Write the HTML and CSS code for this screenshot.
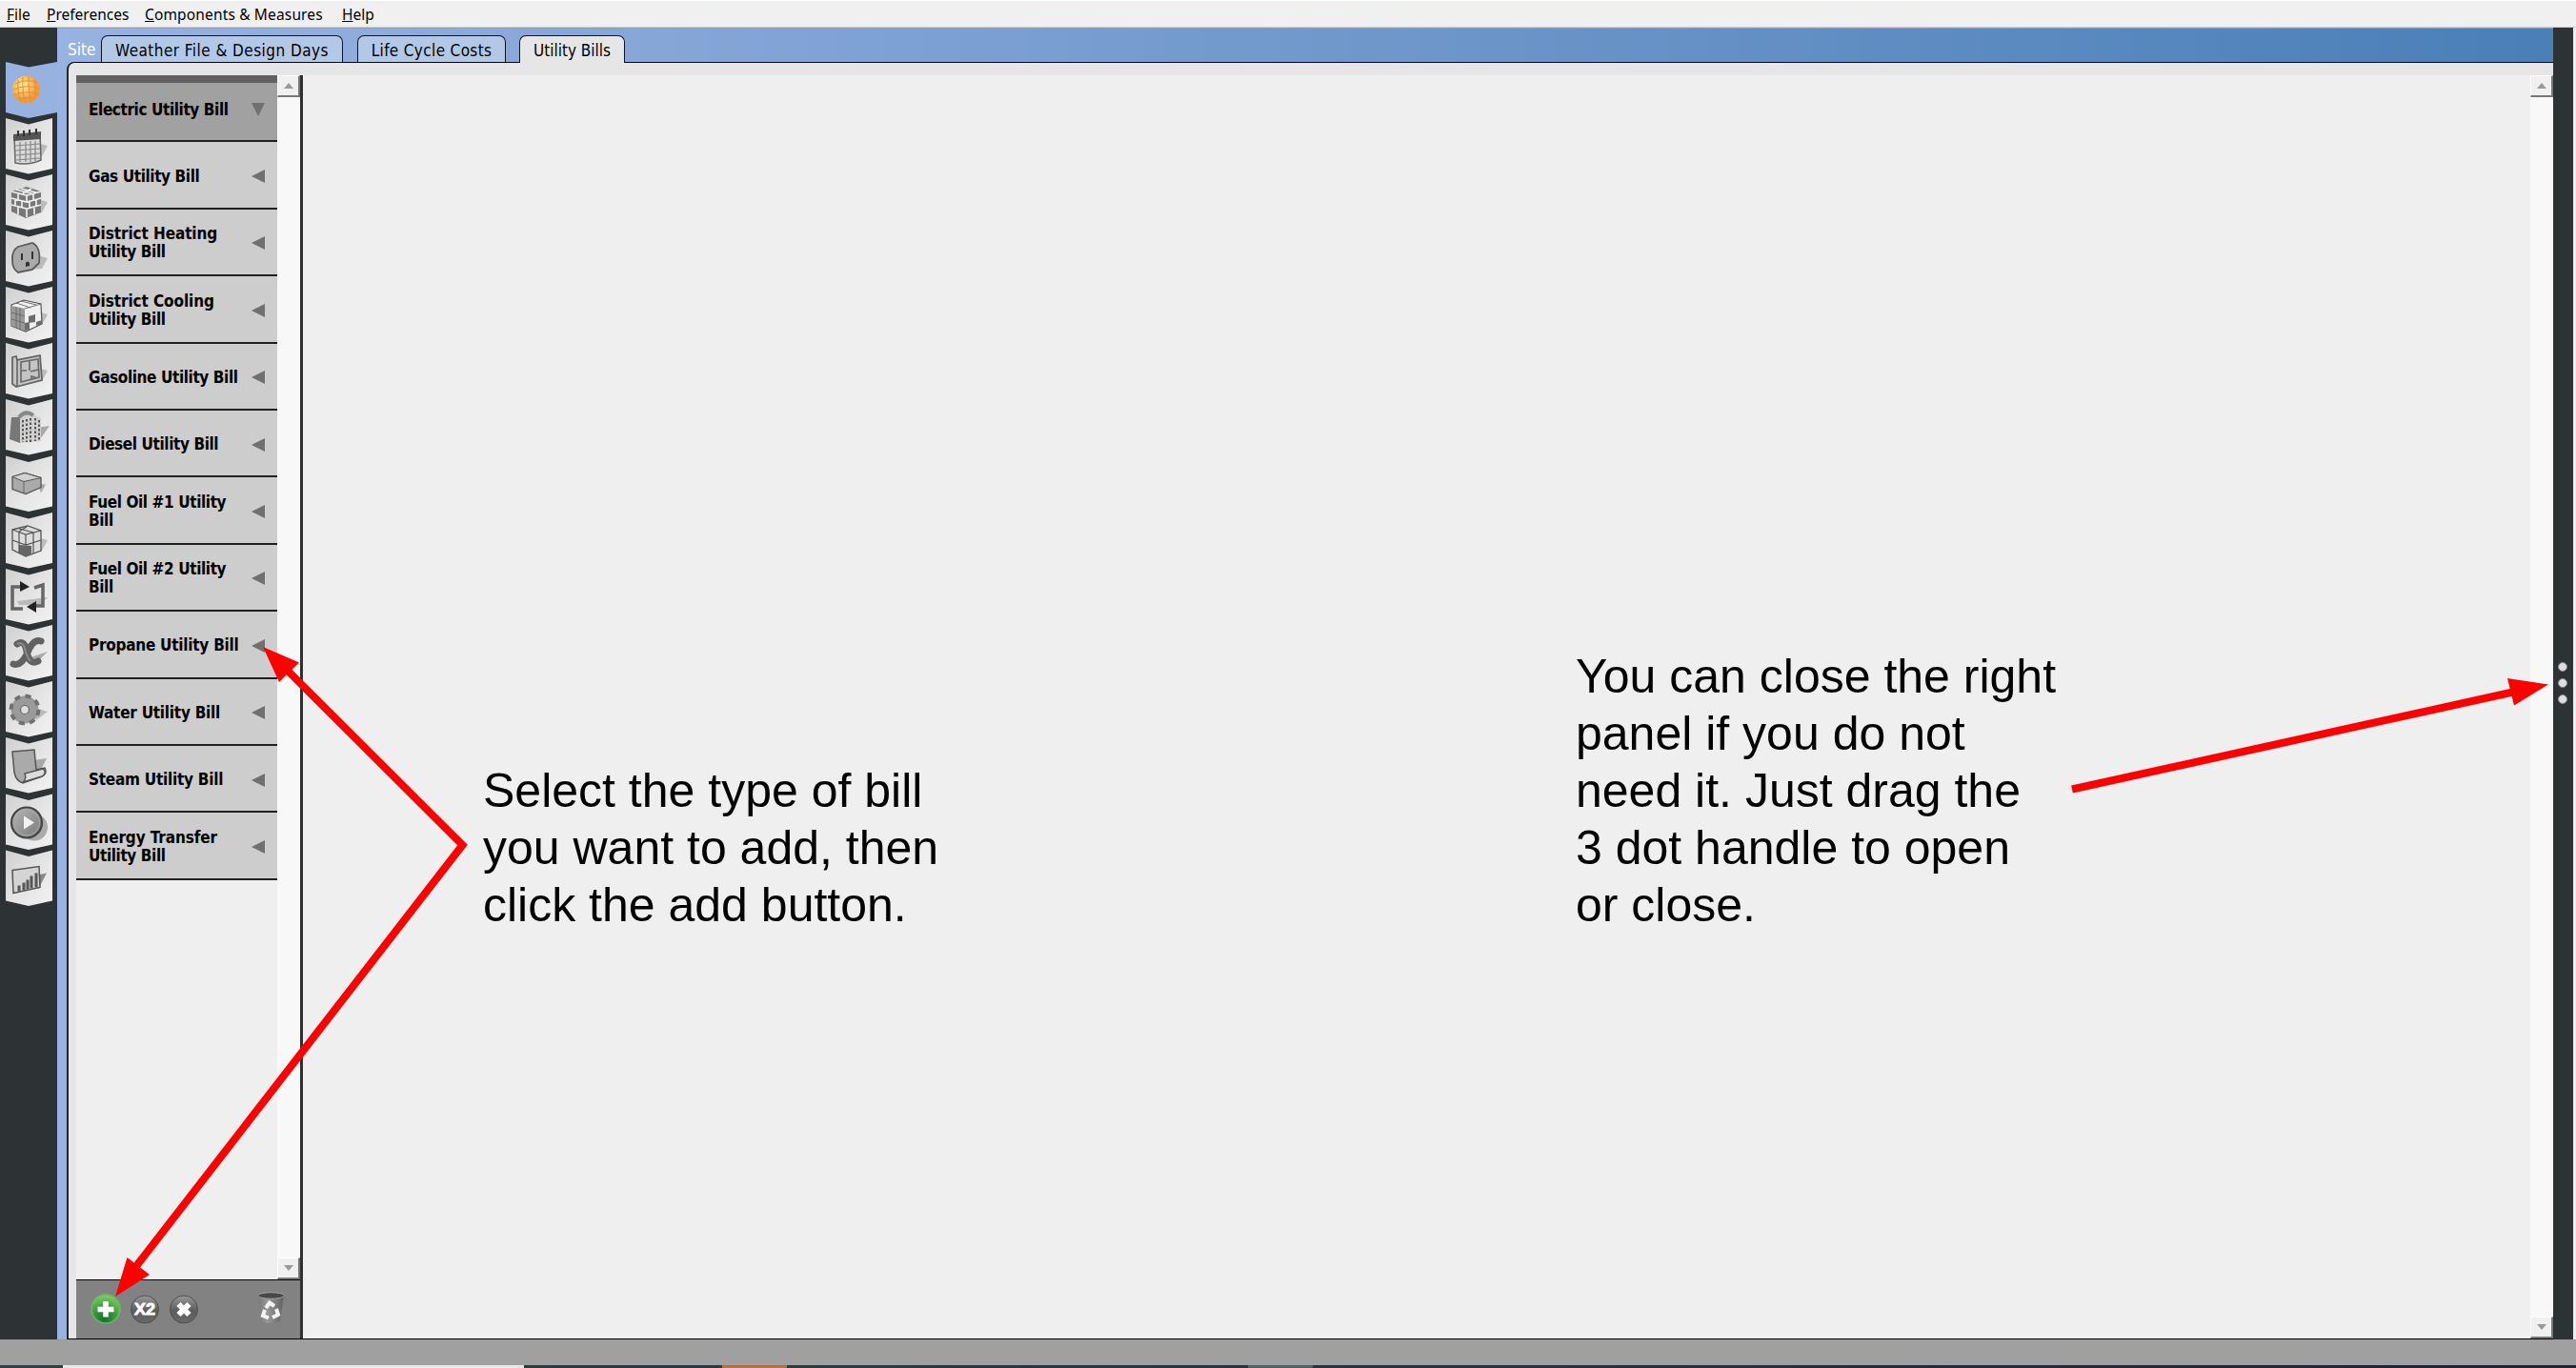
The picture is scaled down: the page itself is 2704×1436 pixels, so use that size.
FILE: index.html
```html
<!DOCTYPE html>
<html lang="en">
<head>
<meta charset="utf-8">
<title>Utility Bills</title>
<link rel="stylesheet" href="styles.css">
</head>
<body>
<div class="app">
  <nav class="menubar">
    <span class="m-file"><u>F</u>ile</span><span class="m-pref"><u>P</u>references</span><span class="m-comp"><u>C</u>omponents &amp; Measures</span><span class="m-help"><u>H</u>elp</span>
  </nav>
  <div class="main">
    <aside class="rail">
      <svg width="60" height="1376" viewBox="0 29 60 1376">
        <defs>
          <linearGradient id="tile" x1="0" y1="0" x2="1" y2="1"><stop offset="0" stop-color="#cfcfcf"/><stop offset=".5" stop-color="#e4e4e4"/><stop offset="1" stop-color="#f2f2f2"/></linearGradient>
          <linearGradient id="gr" x1="0" y1="0" x2="1" y2="1"><stop offset="0" stop-color="#b8b8b8"/><stop offset="1" stop-color="#777"/></linearGradient>
          <radialGradient id="sun" cx=".38" cy=".35"><stop offset="0" stop-color="#fff0a0"/><stop offset=".6" stop-color="#fcc260"/><stop offset="1" stop-color="#f39a3c"/></radialGradient>
          <path id="t" d="M6 0L30 6.500L55 0V53L30 58.500L6 53Z" fill="url(#tile)"/>
          <path id="sh" d="M36 25L50 29L44 40L30 41Z" fill="#a8a8a8" opacity=".7"/>
        </defs>
        <path d="M6 65L30 70.500L60 65V118L30 124L6 118Z" fill="#97b1e0"/>
        <circle cx="27.500" cy="94" r="14.500" fill="url(#sun)"/>
        <path d="M16 88Q28 82 39 87M14 94Q28 88 41 93M15 100Q28 94 41 99M19 105Q29 100 37 104M19 84Q18 98 22 106M24 81Q23 98 27 108M30 80Q30 98 32 107M36 83Q38 94 37 103" fill="none" stroke="#e0913a" stroke-width="1.100"/>

        <g transform="translate(0 124)"><use href="#t"/><use href="#sh"/>
          <path d="M15 18L42 16L43 44Q30 50 16 47Z" fill="#d9d9d9" stroke="#666" stroke-width="1.500"/><path d="M14 17L43 14V22L14 24Z" fill="#555"/><path d="M19 13V19M25 13V19M31 12V18M38 11V17" stroke="#333" stroke-width="2"/><path d="M16 29L42 27M16 34L42 32M16 39L42 37M17 44L42 42M21 25V46M27 25V46M32 24V46M37 24V45" stroke="#858585" stroke-width="1.200"/></g>
        <g transform="translate(0 183)"><use href="#t"/><use href="#sh"/>
          <path d="M12 18L28 13L43 18V40L27 46L12 39Z" fill="#787878"/>
          <path d="M12 18L28 22L43 18M12 25L28 29L43 25M12 32L28 36L43 32M28 22V29M19 20V26M23 28V35M16 26V33M19 34V42M28 36V45M35 20V27M38 26V33M31 28V35M36 34V42M17 16L33 20M22 15L38 19M24 20L33 15" fill="none" stroke="#eee" stroke-width="1.700"/></g>
        <g transform="translate(0 242)"><use href="#t"/><use href="#sh"/>
          <path d="M19 17L34 13Q43 17 41 34L34 41L19 44Q13 40 13 32Q12 21 19 17Z" fill="#aaa" stroke="#5b5b5b" stroke-width="1.800"/><path d="M23 24V31M34 22V30" stroke="#333" stroke-width="2"/><path d="M27 38V34Q29 31 31 34V37Z" fill="#333"/></g>
        <g transform="translate(0 301)"><use href="#t"/><use href="#sh"/>
          <path d="M12 19L25 14L43 18L44 39L27 47L12 41Z" fill="#f0f0f0" stroke="#555" stroke-width="1.200"/><path d="M12 20L26 23V46L12 41Z" fill="#999"/><path d="M26 23L43 18M12 27L26 31M12 34L26 38M17 21V43M21 22V45M17 17L32 22M22 15L38 19" fill="none" stroke="#666" stroke-width=".9"/><path d="M30 31L37 29V37L30 38ZM26 38L31 37V45L26 46ZM38 37L44 35V39L38 41Z" fill="#6d6d6d"/></g>
        <g transform="translate(0 360)"><use href="#t"/><use href="#sh"/>
          <path d="M13 15L17 14L18 18L42 13L44 39L17 46L13 43Z" fill="#c4c4c4" stroke="#666" stroke-width="1.800"/><path d="M18 18V45M22 20L40 17L41 36L22 41ZM23 29H28M31 19V29M40 28L32 30M33 39V35L39 37" fill="none" stroke="#6a6a6a" stroke-width="1.700"/></g>
        <g transform="translate(0 419)"><use href="#t"/><path d="M38 30L52 28L40 45Z" fill="#aaa"/>
          <path d="M12 19L20 16Q24 10 33 13L35 16L43 20V44L22 46L10 42Z" fill="#d0d0d0"/><path d="M12 19L21 19V46L10 42Z" fill="#777"/><path d="M20 19Q27 11 35 17" fill="none" stroke="#888" stroke-width="4"/><path d="M24 22V45M28 21V45M32 20V45M37 20V44M41 22V43" stroke="#555" stroke-width="2" stroke-dasharray="2.500 2"/></g>
        <g transform="translate(0 478.500)"><use href="#t"/><path d="M39 29L48 30L43 39Z" fill="#aaa"/>
          <path d="M13 22L26 18L43 23V33L27 40L13 35Z" fill="#aaa" stroke="#555" stroke-width="1.300"/><path d="M13 22L26 18L43 23L25 27Z" fill="#d2d2d2" stroke="#555"/><path d="M25 27V39" stroke="#666"/></g>
        <g transform="translate(0 538)"><use href="#t"/><use href="#sh"/>
          <path d="M13 18L29 14L43 19V40L27 46L13 39Z" fill="#ddd" stroke="#555" stroke-width="1.300"/><path d="M20 34L33 35V44L27 46L20 43Z" fill="#666"/><path d="M13 18L27 23L43 19M27 23V34M20 17L35 21V43M20 20V43M28 15L20 20M13 29L27 34L43 29" fill="none" stroke="#555" stroke-width="1.200"/></g>
        <g transform="translate(0 597)"><use href="#t"/><path d="M18 34L50 30L42 38H20Z" fill="#bbb"/>
          <path d="M22 19H13V42H24M36 20L45 17V39H38" fill="none" stroke="#666" stroke-width="3.500"/><path d="M21 13L31 19L21 24Z M38 34L28 40L38 46Z" fill="#222"/></g>
        <g transform="translate(0 656)"><use href="#t"/><path d="M32 34L50 28L40 38Z" fill="#aaa"/>
          <path d="M18 20Q26 15 28 28Q31 43 40 38M43 17Q35 14 29 29Q22 44 14 41" fill="none" stroke="#626262" stroke-width="7" stroke-linecap="round"/><path d="M18 20Q25 17 27 28Q29 35 32 38" fill="none" stroke="#8a8a8a" stroke-width="2"/></g>
        <g transform="translate(0 715)"><use href="#t"/><path d="M36 28L50 32L38 41Z" fill="#bbb"/>
          <circle cx="26" cy="30" r="9.500" fill="none" stroke="#9a9a9a" stroke-width="10"/><circle cx="26" cy="30" r="14.500" fill="none" stroke="#707070" stroke-width="4" stroke-dasharray="6 5.400"/><circle cx="26" cy="30" r="4.500" fill="#ddd" stroke="#666" stroke-width="1.200"/></g>
        <g transform="translate(0 774)"><use href="#t"/><path d="M35 24L49 22L39 42Z" fill="#aaa"/>
          <path d="M13 15L36 13L38 34L47 32Q50 38 44 41L24 48Q17 46 15 37Z" fill="#aaa" stroke="#555" stroke-width="1.500"/><path d="M24 47Q28 44 26 38L45 33Q50 37 44 41Z" fill="#ddd" stroke="#555" stroke-width="1.500"/></g>
        <g transform="translate(0 833.500)"><use href="#t"/><circle cx="36" cy="35" r="14" fill="#aaa"/>
          <circle cx="28" cy="30" r="16" fill="url(#gr)" stroke="#444" stroke-width="2.200"/><circle cx="28" cy="30" r="13.500" fill="none" stroke="#aaa"/><path d="M25 23L36 30L25 37Z" fill="#f2f2f2"/></g>
        <g transform="translate(0 892.500)"><use href="#t"/><path d="M39 26L49 24L40 41Z" fill="#888"/>
          <path d="M13 21L41 17L42 39L14 45Z" fill="#d4d4d4" stroke="#555" stroke-width="1.500"/><path d="M20 43V37M25 42V34M29 41V31M33 40V27M38 39V24" stroke="#555" stroke-width="3"/></g>
      </svg>
    </aside>
    <section class="stage">
      <header class="tabs">
        <span class="site">Site</span>
        <span class="tab tab-a"><b>Weather File &amp; Design Days</b></span>
        <span class="tab tab-b"><b>Life Cycle Costs</b></span>
        <span class="tab tab-c"><b>Utility Bills</b></span>
      </header>
      <div class="panel">
        <div class="left">
          <div class="listwrap">
            <div class="list">
              <div class="row on"><span>Electric Utility Bill</span><i class="down"></i></div>
              <div class="row"><span>Gas Utility Bill</span><i></i></div>
              <div class="row"><span><em>District Heating</em><br>Utility Bill</span><i></i></div>
              <div class="row"><span><em>District Cooling</em><br>Utility Bill</span><i></i></div>
              <div class="row"><span>Gasoline Utility Bill</span><i></i></div>
              <div class="row"><span>Diesel Utility Bill</span><i></i></div>
              <div class="row"><span>Fuel Oil #1 Utility<br>Bill</span><i></i></div>
              <div class="row"><span>Fuel Oil #2 Utility<br>Bill</span><i></i></div>
              <div class="row mid"><span>Propane Utility Bill</span><i></i></div>
              <div class="row mid"><span>Water Utility Bill</span><i></i></div>
              <div class="row mid"><span>Steam Utility Bill</span><i></i></div>
              <div class="row"><span><em>Energy Transfer</em><br>Utility Bill</span><i></i></div>
            </div>
            <div class="scroll"><div class="sb up"></div><div class="sb dn"></div></div>
          </div>
          <div class="tools">
            <svg width="235" height="61" viewBox="80 1344 235 61">
              <defs>
                <radialGradient id="gn" cx=".45" cy=".85" r=".9"><stop offset="0" stop-color="#176f2c"/><stop offset=".5" stop-color="#3fa13e"/><stop offset="1" stop-color="#92d36e"/></radialGradient>
                <linearGradient id="gb" x1="0" y1="0" x2="0" y2="1"><stop offset="0" stop-color="#999"/><stop offset=".55" stop-color="#5c5c5c"/><stop offset="1" stop-color="#696969"/></linearGradient>
                <linearGradient id="bin"><stop offset="0" stop-color="#777"/><stop offset=".35" stop-color="#999"/><stop offset="1" stop-color="#606060"/></linearGradient>
              </defs>
              <circle cx="111" cy="1374" r="15.500" fill="url(#gn)"/><circle cx="111" cy="1374" r="15" fill="none" stroke="#65ba63" stroke-width="1.500"/>
              <path d="M111 1366V1382.500M102.500 1374.500H119.500" stroke="#fff" stroke-width="5.500"/>
              <circle cx="152" cy="1374.500" r="14.500" fill="url(#gb)" stroke="#505050"/>
              <text x="152" y="1380" text-anchor="middle" textLength="22" lengthAdjust="spacingAndGlyphs" class="x2">X2</text>
              <circle cx="193" cy="1374.500" r="14.500" fill="url(#gb)" stroke="#505050"/>
              <path d="M187.500 1369L198.500 1380M198.500 1369L187.500 1380" stroke="#fff" stroke-width="6"/>
              <path d="M271 1360L275 1387Q284 1391 294 1387L298 1360Z" fill="url(#bin)"/>
              <ellipse cx="284.500" cy="1360" rx="14" ry="3.300" fill="#484848" stroke="#a5a5a5"/>
              <g fill="none" stroke="#f4f4f4" stroke-width="4"><path d="M279 1373L283 1367.500L288 1371"/><path d="M290 1374L292 1380L286 1383"/><path d="M282 1383.500L276 1381L278 1375"/></g>
            </svg>
          </div>
        </div>
        <div class="content"><div class="scroll right"><div class="sb up"></div><div class="sb dn"></div></div></div>
      </div>
    </section>
    <aside class="handle"><i></i><i></i><i></i></aside>
    <div class="edge"></div>
  </div>
  <div class="status"></div>
  <div class="taskbar"><i class="tk1"></i><i class="tk2"></i><i class="tk3"></i><i class="tk4"></i><i class="tk5"></i><i class="tk6"></i><i class="tk7"></i></div>
  <svg class="arrows" width="2704" height="1436" viewBox="0 0 2704 1436">
    <path d="M300 702L485.500 887L140 1333M2175 828.500L2640 726" fill="none" stroke="#f00" stroke-width="8"/>
    <path d="M276 679L314 695.500L293 716ZM121 1361L133.500 1320L157 1338ZM2675 718.500L2632 712L2639 740.500Z" fill="#f00"/>
  </svg>
  <p class="note n1">Select the type of bill<br>you want to add, then<br>click the add button.</p>
  <p class="note n2">You can close the right<br>panel if you do not<br>need it. Just drag the<br>3 dot handle to open<br>or close.</p>
</div>
</body>
</html>
```

FILE: styles.css
```css
* { box-sizing: border-box; }
body { margin: 0; font-family: "DejaVu Sans Condensed", "DejaVu Sans", sans-serif; color: #000; }
.app { position: relative; width: 2704px; height: 1436px; overflow: hidden; display: flex; flex-direction: column; background: #efefef; }
.menubar { height: 29px; flex: none; display: flex; align-items: center; padding: 1px 0 0 7px; gap: 17px; font: 15.500px/24px "Noto Sans", sans-serif; background: #f0f0f0; border-top: 1px solid #fff; border-bottom: 1px solid #ccc; white-space: nowrap; }
.m-file { width: 25px; }
.m-pref { width: 86px; }
.m-comp { width: 190px; letter-spacing: .15px; }
.main { height: 1377px; display: flex; flex: none; }
.rail { width: 60px; background: #2d3234; }
.rail svg { display: block; }
.stage { width: 2620px; display: flex; flex-direction: column; padding-left: 10px; background: linear-gradient(90deg, #98b2e1, #4a7fb7); border-top: 1px solid #8fa0b5; }
.tabs { height: 35px; display: flex; align-items: flex-end; padding-left: 1px; font-size: 17px; white-space: nowrap; }
.site { width: 35px; color: #fff; line-height: 26px; }
.tab { height: 28px; border: 1.5px solid #10151d; border-bottom: 0; border-radius: 7px 7px 0 0; background: #b3c8e6; display: flex; justify-content: center; line-height: 31px; }
.tab b { font-weight: normal; }
.tab-a { width: 254px; letter-spacing: .45px; }
.tab-b { width: 156px; margin-left: 15px; letter-spacing: .35px; }
.tab-c { width: 111px; margin-left: 14px; background: #e6e6e6; height: 29px; margin-bottom: -1px; position: relative; }
.panel { flex: 1; border-top: 1px solid #000; border-left: 2px solid #1d2638; border-bottom: 1px solid #000; border-radius: 8px 0 0 0; background: #e6e6e6; padding: 13px 0 0 8px; display: flex; }
.left { width: 238px; border-right: 3px solid #303030; display: flex; flex-direction: column; }
.listwrap { flex: 1; display: flex; background: #efefef; border-bottom: 1px solid #000; }
.list { width: 211px; }
.row { height: 70.400px; border-bottom: 2px solid #202020; background: #cdcdcd; display: flex; align-items: center; justify-content: space-between; padding: 3px 13px 0; font: bold 17px/19px "DejaVu Sans Condensed", "DejaVu Sans", sans-serif; letter-spacing: -.4px; white-space: nowrap; }
.row span { width: 170px; }
.row em { font-style: normal; letter-spacing: -.1px; }
.row.mid { letter-spacing: -.25px; }
.row i { width: 0; height: 0; border: 7px solid transparent; border-right: 14px solid #707070; border-left: 0; }
.row.on { background: #a1a1a1; border-top: 8px solid #626262; padding: 0 13px 4px; }
.row .down { border: 7px solid transparent; border-top: 14px solid #707070; border-bottom: 0; }
.scroll { width: 24px; display: flex; flex-direction: column; justify-content: space-between; background: #f8f8f8; }
.sb { height: 23px; display: flex; align-items: center; justify-content: center; background: #f0f0f0; border: 1px solid #fff; border-right: 2px solid #777; border-bottom: 2px solid #777; }
.sb::after { content: ""; border: 5px solid transparent; border-top: 0; border-bottom: 6px solid #999; }
.dn::after { border-bottom: 0; border-top: 6px solid #999; }
.tools { height: 61px; background: #828282; }
.tools svg { display: block; }
.x2 { font: bold 16px "Liberation Sans", sans-serif; fill: #fff; stroke: #fff; stroke-width: .8px; }
.content { flex: 1; background: #efefef; display: flex; justify-content: flex-end; }
.handle { width: 21px; background: #2d3234; display: flex; flex-direction: column; align-items: center; gap: 7px; padding: 666px 2px 0 0; }
.handle i { width: 10px; height: 10px; border-radius: 50%; background: #dedede; border: 1px solid #888; }
.edge { width: 3px; background: #eee; }
.status { height: 27px; flex: none; background: #a0a0a0; border-top: 1px solid #999; }
.taskbar { height: 3px; flex: none; display: flex; background: linear-gradient(90deg, #29434a, #24333f 60%, #20203c); }
.tk1 { width: 66px; }
.tk2 { width: 484px; background: #e8e8e8; }
.tk3 { width: 208px; }
.tk4 { width: 68px; background: #c8692c; }
.tk5 { width: 484px; }
.tk6 { width: 68px; background: #4f6468; }
.tk7 { flex: 1; }
.arrows { position: absolute; left: 0; top: 0; }
.note { position: absolute; margin: 0; font: 50px/60px "Liberation Sans", sans-serif; white-space: nowrap; }
.n1 { left: 507px; top: 800px; }
.n2 { left: 1654px; top: 680px; }
```
